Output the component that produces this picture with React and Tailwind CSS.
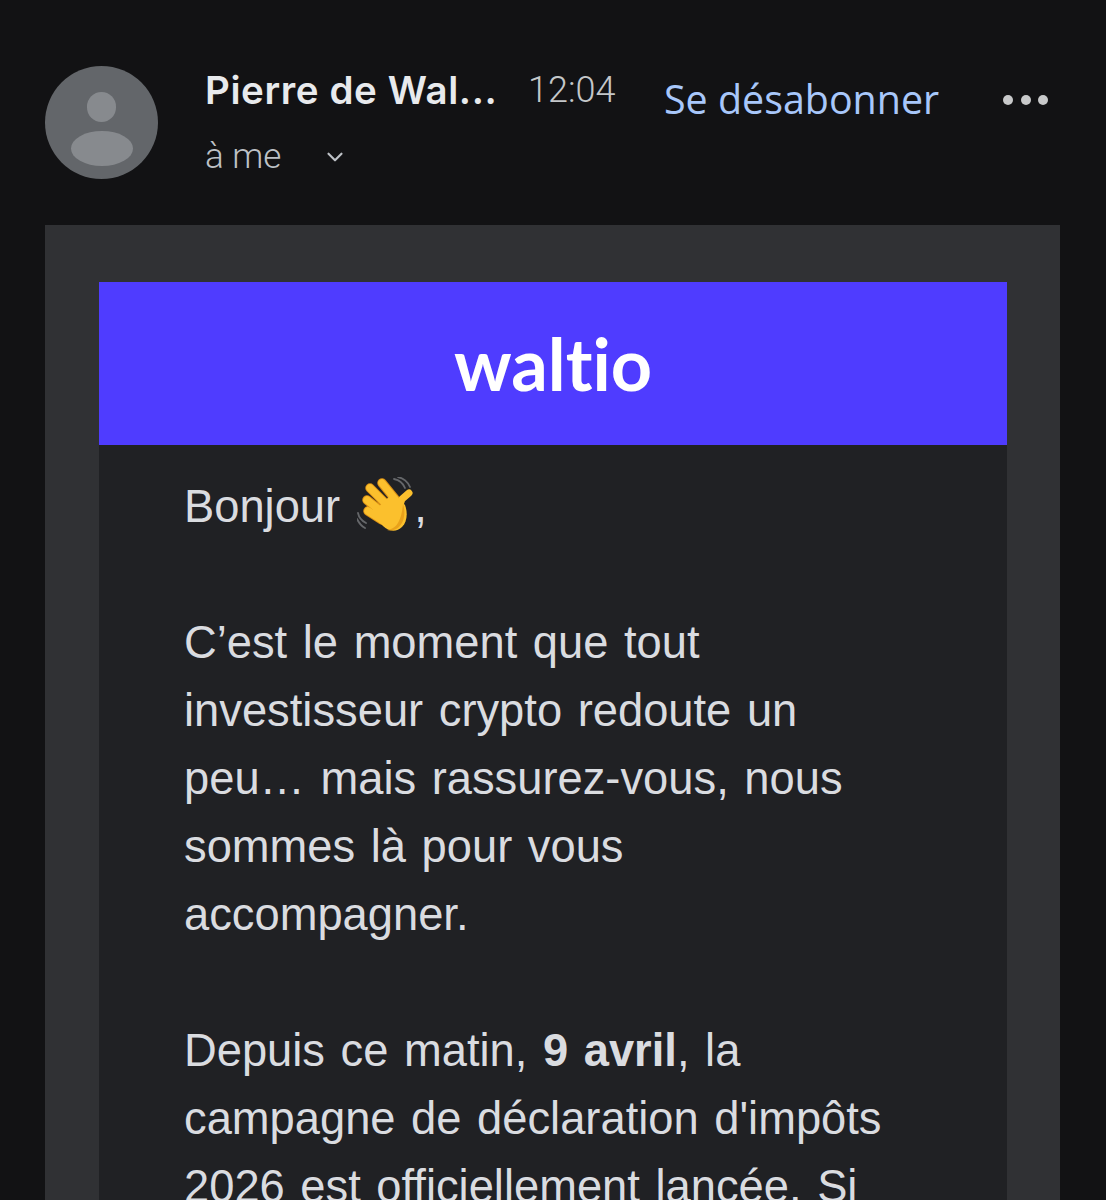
import React from 'react';
import { ChevronDown } from 'lucide-react';

const WaveEmoji = () => (
  <svg width="57" height="56" viewBox="0 0 57 56" className="shrink-0">
    {/* motion lines */}
    <path d="M37 2c5 1 9 4 11 9M41 0c5 1 10 5 12 10" fill="none" stroke="#65676a" strokeWidth="1.8" strokeLinecap="round" />
    <path d="M1 36c1 5 4 8 8 10M0 42c2 4 4 7 8 9" fill="none" stroke="#65676a" strokeWidth="1.8" strokeLinecap="round" />
    {/* finger edges */}
    <g fill="none" stroke="#d98f14" strokeWidth="9.5" strokeLinecap="round">
      <path d="M25 6l13 16M13 11l17 17M10 23l15 12M11 34l14 9" />
    </g>
    {/* fingers and thumb */}
    <g fill="none" stroke="#fbc02d" strokeWidth="7.5" strokeLinecap="round">
      <path d="M25 6l13 16M13 11l17 17M10 23l15 12M11 34l14 9" />
      <path d="M52 16l-7 6-3 9" strokeWidth="7" />
    </g>
    {/* palm */}
    <path d="M36 16l12 12c3 8 2 17-3 22-5 5-13 5-19-1L14 37z" fill="#fbc02d" />
    <path d="M46 27c3 9 1 18-4 23-3 3-8 4-12 3 8-1 14-6 16-26z" fill="#e9a21b" />
  </svg>
);

const App = () => {
  return (
    <div className="h-[1200px] overflow-hidden bg-[#121214] font-['Roboto',sans-serif]">
      {/* Header */}
      <header className="flex h-[225px] pl-[45px] pt-[66px]">
        <div className="relative h-[113px] w-[113px] shrink-0 rounded-full bg-[#63666a]">
          <div className="absolute left-[42px] top-[26px] h-[30px] w-[29px] rounded-full bg-[#878a8e]" />
          <div className="absolute left-[26px] top-[65px] h-[35px] w-[62px] rounded-[50%] bg-[#878a8e]" />
        </div>

        <div className="ml-[47px] w-[323px] shrink-0">
          <div className="whitespace-nowrap pt-[2px] font-['Inter',sans-serif] text-[38.5px] font-semibold leading-[44px] tracking-[0.6px] text-[#e8eaed]">Pierre de Wal...</div>
          <div className="mt-[25px] flex items-center text-[35px] font-light leading-[40px] text-[#bdc1c6]">
            <span>à me</span>
            <ChevronDown size={26} strokeWidth={2} className="ml-[41px] text-[#bdc1c6]" />
          </div>
        </div>

        <div className="w-[136px] shrink-0 pt-[2px] text-[36px] font-light leading-[44px] text-[#c4c7c9]">12:04</div>

        <div className="shrink-0 pt-[11px] font-['Open_Sans',sans-serif] text-[39.4px] font-medium leading-[44px] text-[#a8c7fa]">Se désabonner</div>

        <div className="ml-[64px] mt-[29px] flex h-[10px] gap-[7.5px]">
          <span className="h-[10px] w-[10px] rounded-full bg-[#c8c9ca]" />
          <span className="h-[10px] w-[10px] rounded-full bg-[#c8c9ca]" />
          <span className="h-[10px] w-[10px] rounded-full bg-[#c8c9ca]" />
        </div>
      </header>

      {/* Email */}
      <main className="ml-[45px] w-[1015px] bg-[#303134] pl-[54px] pr-[53px] pt-[57px]">
        <div className="flex h-[163px] items-center justify-center bg-[#4f3cff]">
          <span className="mt-[-2px] font-['Lato',sans-serif] text-[72px] font-bold leading-none text-white [font-variant-ligatures:none]">waltio</span>
        </div>

        <div className="h-[800px] bg-[#202124] pl-[85px] pt-[28px] font-['Liberation_Sans',sans-serif] text-[45.3px] leading-[68px] text-[#dadce0] [word-spacing:3px]">
          <p className="flex h-[68px] items-center">
            Bonjour
            <span className="ml-[17px] mt-[-4px]"><WaveEmoji /></span>
            <span>,</span>
          </p>
          <p className="mt-[68px]">
            C’est le moment que tout<br />
            investisseur crypto redoute un<br />
            peu… mais rassurez-vous, nous<br />
            sommes là pour vous<br />
            accompagner.
          </p>
          <p className="mt-[68px]">
            Depuis ce matin, <strong className="font-bold">9 avril</strong>, la<br />
            campagne de déclaration d'impôts<br />
            2026 est officiellement lancée. Si
          </p>
        </div>
      </main>
    </div>
  );
};

export default App;
